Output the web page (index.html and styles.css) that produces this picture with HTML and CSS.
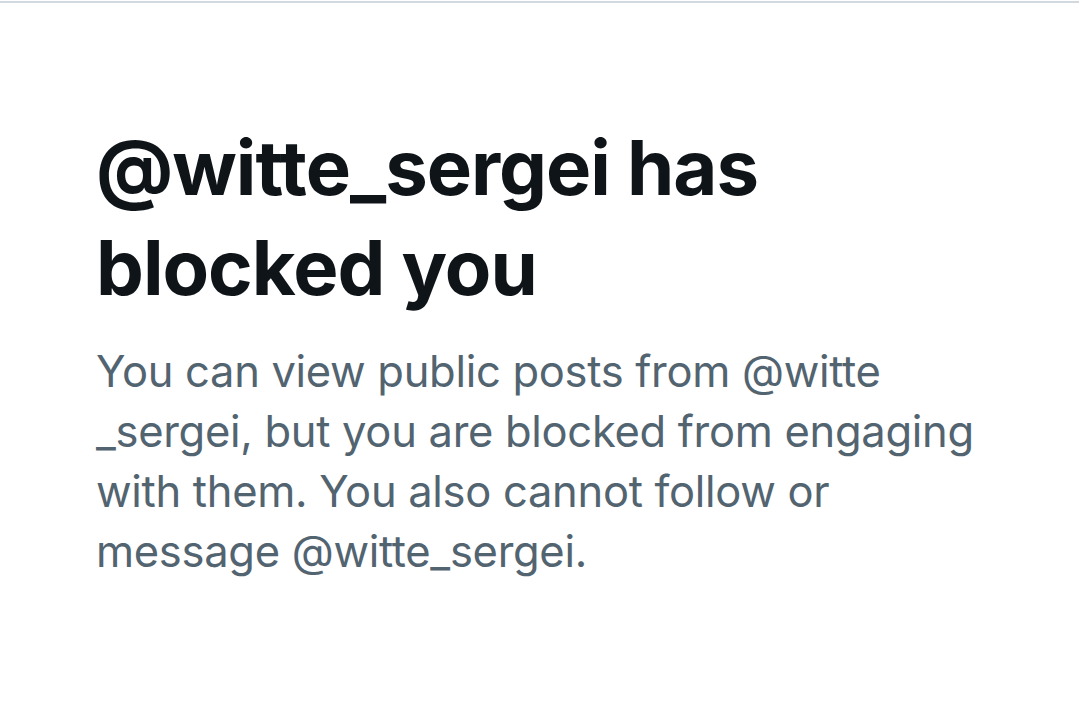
FILE: index.html
```html
<!DOCTYPE html>
<html>
<head>
<meta charset="utf-8">
<link rel="stylesheet" href="styles.css">
</head>
<body>
<div class="topline"></div>
<main class="content">
  <h1 class="title">@witte_sergei has blocked you</h1>
  <p class="desc">You can view public posts from @witte<wbr>_sergei, but you are blocked from engaging with them. You also cannot follow or message @witte_sergei.</p>
</main>
</body>
</html>
```
FILE: styles.css
```css
html, body {
  margin: 0;
  padding: 0;
  background: #ffffff;
}
body {
  width: 1079px;
  height: 719px;
  overflow: hidden;
  font-family: Inter, "Noto Sans", sans-serif;
}
.topline {
  margin-top: 1px;
  height: 2px;
  background: #cfd9de;
}
.content {
  padding: 114px 0 0 96px;
  width: 890px;
}
.title {
  margin: 0;
  font-size: 76px;
  line-height: 100px;
  font-weight: 700;
  color: #0f1419;
  letter-spacing: -1px;
}
.desc {
  margin: 24px 0 0;
  font-size: 43.5px;
  line-height: 60px;
  font-weight: 400;
  color: #536471;
  letter-spacing: -0.3px;
}
```
